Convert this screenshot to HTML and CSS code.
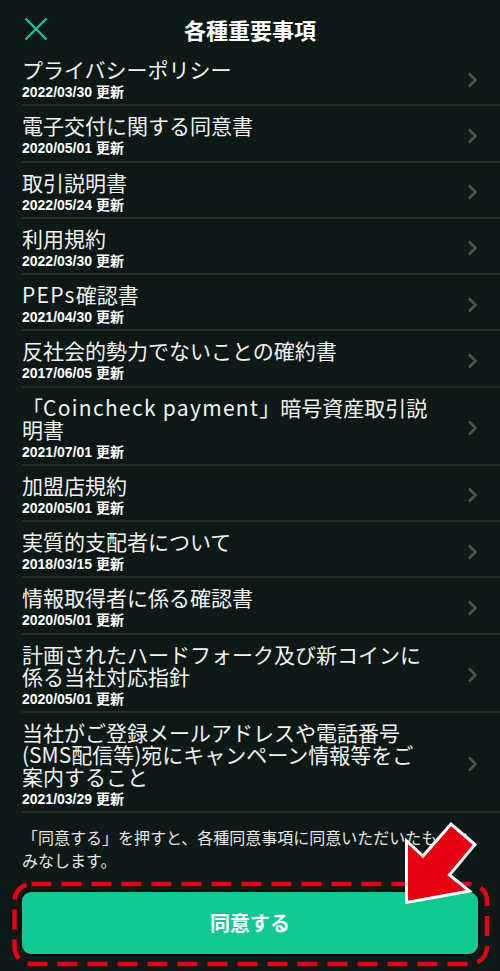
FILE: index.html
```html
<!DOCTYPE html>
<html lang="ja">
<head>
  <meta charset="UTF-8">
  <meta name="viewport" content="width=device-width, initial-scale=1.0">
  <title>各種重要事項</title>
  <link rel="stylesheet" href="styles.css">
</head>
<body>
  <header class="top-bar">
    <button class="close-btn" aria-label="閉じる">
      <svg width="24" height="24" viewBox="0 0 24 24"><path d="M1.5 1.5 L22.5 22.5 M22.5 1.5 L1.5 22.5" /></svg>
    </button>
    <h1>各種重要事項</h1>
    <span></span>
  </header>

  <ul class="doc-list">
    <li class="doc-item">
      <div class="doc-text"><div class="doc-title">プライバシーポリシー</div><div class="doc-date">2022/03/30 更新</div></div>
      <svg class="chevron" width="12" height="16" viewBox="0 0 12 16"><path d="M3 1.5 L9.5 8 L3 14.5" /></svg>
    </li>
    <li class="doc-item">
      <div class="doc-text"><div class="doc-title">電子交付に関する同意書</div><div class="doc-date">2020/05/01 更新</div></div>
      <svg class="chevron" width="12" height="16" viewBox="0 0 12 16"><path d="M3 1.5 L9.5 8 L3 14.5" /></svg>
    </li>
    <li class="doc-item">
      <div class="doc-text"><div class="doc-title">取引説明書</div><div class="doc-date">2022/05/24 更新</div></div>
      <svg class="chevron" width="12" height="16" viewBox="0 0 12 16"><path d="M3 1.5 L9.5 8 L3 14.5" /></svg>
    </li>
    <li class="doc-item">
      <div class="doc-text"><div class="doc-title">利用規約</div><div class="doc-date">2022/03/30 更新</div></div>
      <svg class="chevron" width="12" height="16" viewBox="0 0 12 16"><path d="M3 1.5 L9.5 8 L3 14.5" /></svg>
    </li>
    <li class="doc-item">
      <div class="doc-text"><div class="doc-title"><span class="latin">PEPs</span>確認書</div><div class="doc-date">2021/04/30 更新</div></div>
      <svg class="chevron" width="12" height="16" viewBox="0 0 12 16"><path d="M3 1.5 L9.5 8 L3 14.5" /></svg>
    </li>
    <li class="doc-item">
      <div class="doc-text"><div class="doc-title">反社会的勢力でないことの確約書</div><div class="doc-date">2017/06/05 更新</div></div>
      <svg class="chevron" width="12" height="16" viewBox="0 0 12 16"><path d="M3 1.5 L9.5 8 L3 14.5" /></svg>
    </li>
    <li class="doc-item">
      <div class="doc-text"><div class="doc-title">「<span class="latin">Coincheck payment</span>」暗号資産取引説明書</div><div class="doc-date">2021/07/01 更新</div></div>
      <svg class="chevron" width="12" height="16" viewBox="0 0 12 16"><path d="M3 1.5 L9.5 8 L3 14.5" /></svg>
    </li>
    <li class="doc-item">
      <div class="doc-text"><div class="doc-title">加盟店規約</div><div class="doc-date">2020/05/01 更新</div></div>
      <svg class="chevron" width="12" height="16" viewBox="0 0 12 16"><path d="M3 1.5 L9.5 8 L3 14.5" /></svg>
    </li>
    <li class="doc-item">
      <div class="doc-text"><div class="doc-title">実質的支配者について</div><div class="doc-date">2018/03/15 更新</div></div>
      <svg class="chevron" width="12" height="16" viewBox="0 0 12 16"><path d="M3 1.5 L9.5 8 L3 14.5" /></svg>
    </li>
    <li class="doc-item">
      <div class="doc-text"><div class="doc-title">情報取得者に係る確認書</div><div class="doc-date">2020/05/01 更新</div></div>
      <svg class="chevron" width="12" height="16" viewBox="0 0 12 16"><path d="M3 1.5 L9.5 8 L3 14.5" /></svg>
    </li>
    <li class="doc-item">
      <div class="doc-text"><div class="doc-title">計画されたハードフォーク及び新コインに係る当社対応指針</div><div class="doc-date">2020/05/01 更新</div></div>
      <svg class="chevron" width="12" height="16" viewBox="0 0 12 16"><path d="M3 1.5 L9.5 8 L3 14.5" /></svg>
    </li>
    <li class="doc-item">
      <div class="doc-text"><div class="doc-title">当社がご登録メールアドレスや電話番号(SMS配信等)宛にキャンペーン情報等をご案内すること</div><div class="doc-date">2021/03/29 更新</div></div>
      <svg class="chevron" width="12" height="16" viewBox="0 0 12 16"><path d="M3 1.5 L9.5 8 L3 14.5" /></svg>
    </li>
  </ul>

  <p class="agree-note">「同意する」を押すと、各種同意事項に同意いただいたものとみなします。</p>

  <button class="agree-btn">同意する</button>

  <!-- annotation: dashed frame and arrow pointing at the button -->
  <svg class="annotation" width="500" height="971" viewBox="0 0 500 971">
    <rect class="dash-frame" x="14.5" y="884" width="472.5" height="80" rx="17" />
    <polygon class="arrow" points="406.5,902.5 406.5,841 423,856 451,824 475,844.5 449.5,875 469.5,891" />
  </svg>
</body>
</html>
```

FILE: styles.css
```css
* {
  margin: 0;
  padding: 0;
  box-sizing: border-box;
}

body {
  width: 500px;
  height: 971px;
  overflow: hidden;
  position: relative;
  background: #0c1916;
  color: #f2f2f2;
  font-family: "Noto Sans CJK JP", sans-serif;
}

.top-bar {
  display: grid;
  grid-template-columns: 1fr auto 1fr;
  align-items: center;
  height: 50px;
  padding: 8px 0 0 24px;
}

.close-btn {
  background: none;
  border: none;
  width: 24px;
  height: 24px;
  cursor: pointer;
}

.close-btn svg {
  display: block;
  stroke: #1ec48d;
  stroke-width: 2.4;
  fill: none;
}

.top-bar h1 {
  font-size: 22px;
  font-weight: bold;
  line-height: 30px;
  color: #ffffff;
  margin-right: 24px;
}

.doc-list {
  list-style: none;
}

.doc-item {
  display: flex;
  align-items: center;
  margin-left: 22px;
  padding: 8px 22px 3.25px 0;
  border-bottom: 2px solid #222c29;
}

.doc-text {
  flex: 1;
  padding-right: 32px;
}

.doc-title {
  font-size: 21px;
  line-height: 22px;
}

.doc-title .latin {
  letter-spacing: 1.3px;
}

.doc-date {
  margin-top: 3px;
  font-family: "Liberation Sans", "Noto Sans CJK JP", sans-serif;
  font-size: 14px;
  font-weight: bold;
  line-height: 18px;
  color: #ffffff;
}

.chevron {
  flex-shrink: 0;
  fill: none;
  stroke: #4d5552;
  stroke-width: 2.6;
}

.agree-note {
  padding: 13px 22px 0 22px;
  font-size: 16px;
  line-height: 23px;
  color: #e8e8e8;
}

.agree-btn {
  display: block;
  width: 460px;
  height: 66px;
  margin: 17.5px 20px 0 20px;
  background: #12c892;
  border: 2px solid #050c0a;
  border-radius: 11px;
  color: #ffffff;
  font-family: "Noto Sans CJK JP", sans-serif;
  font-size: 20px;
  font-weight: bold;
  cursor: pointer;
}

.annotation {
  position: absolute;
  top: 0;
  left: 0;
  pointer-events: none;
}

.dash-frame {
  fill: none;
  stroke: #e60012;
  stroke-width: 4.5;
  stroke-dasharray: 20 10;
}

.arrow {
  fill: #e60012;
  stroke: #ffffff;
  stroke-width: 3;
  stroke-linejoin: miter;
}
```
